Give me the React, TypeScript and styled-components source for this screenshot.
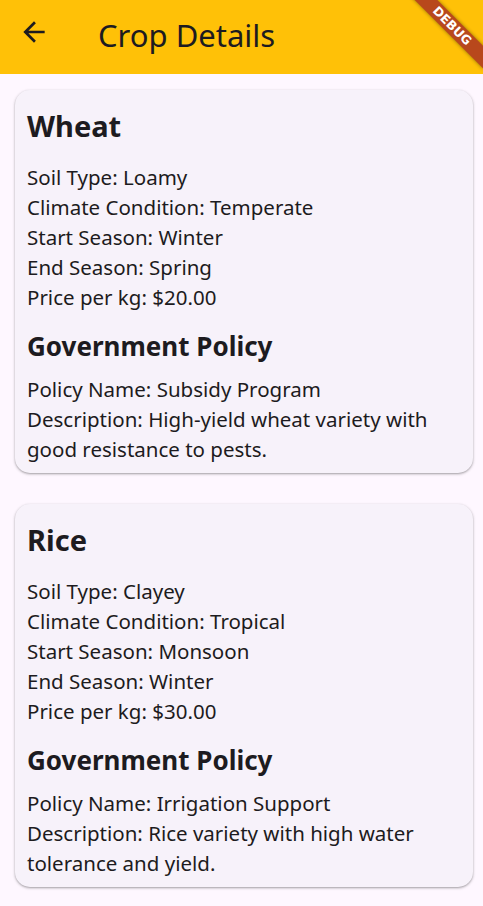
import React from 'react';
import { createGlobalStyle, styled } from 'styled-components';

const AMBER = '#FFC107';
const PAGE_BG = '#FEF7FF';
const CARD_BG = '#F7F2FA';
const TEXT = '#1D1B20';
const FONT = `'Noto Sans', 'Open Sans', sans-serif`;

interface Crop {
  name: string;
  soilType: string;
  climate: string;
  startSeason: string;
  endSeason: string;
  price: number;
  policyName: string;
  description: string;
}

const crops: Crop[] = [
  {
    name: 'Wheat',
    soilType: 'Loamy',
    climate: 'Temperate',
    startSeason: 'Winter',
    endSeason: 'Spring',
    price: 20,
    policyName: 'Subsidy Program',
    description: 'High-yield wheat variety with good resistance to pests.',
  },
  {
    name: 'Rice',
    soilType: 'Clayey',
    climate: 'Tropical',
    startSeason: 'Monsoon',
    endSeason: 'Winter',
    price: 30,
    policyName: 'Irrigation Support',
    description: 'Rice variety with high water tolerance and yield.',
  },
];

function BackIcon() {
  return (
    <svg width="32" height="32" viewBox="0 0 24 24" fill={TEXT}>
      <path d="M20 11H7.83l5.59-5.59L12 4l-8 8 8 8 1.41-1.41L7.83 13H20v-2z" />
    </svg>
  );
}

function CropCard({ crop }: { crop: Crop }) {
  return (
    <Card>
      <CropName>{crop.name}</CropName>
      <InfoList>
        <InfoLine>Soil Type: {crop.soilType}</InfoLine>
        <InfoLine>Climate Condition: {crop.climate}</InfoLine>
        <InfoLine>Start Season: {crop.startSeason}</InfoLine>
        <InfoLine>End Season: {crop.endSeason}</InfoLine>
        <InfoLine>Price per kg: ${crop.price.toFixed(2)}</InfoLine>
      </InfoList>
      <SectionTitle>Government Policy</SectionTitle>
      <PolicyList>
        <InfoLine>Policy Name: {crop.policyName}</InfoLine>
        <InfoLine>Description: {crop.description}</InfoLine>
      </PolicyList>
    </Card>
  );
}

export default function App() {
  return (
    <Screen>
      <GlobalStyle />
      <AppBar>
        <BackButton>
          <BackIcon />
        </BackButton>
        <BarTitle>Crop Details</BarTitle>
      </AppBar>
      <CardList>
        {crops.map((crop) => (
          <CropCard key={crop.name} crop={crop} />
        ))}
      </CardList>
      <DebugBanner>DEBUG</DebugBanner>
    </Screen>
  );
}

const GlobalStyle = createGlobalStyle`
  html, body {
    margin: 0;
    padding: 0;
    background: ${PAGE_BG};
  }
  * {
    box-sizing: border-box;
  }
`;

const Screen = styled.div`
  position: relative;
  width: 483px;
  height: 906px;
  overflow: hidden;
  background: ${PAGE_BG};
  font-family: ${FONT};
  color: ${TEXT};
`;

const AppBar = styled.header`
  display: flex;
  align-items: flex-start;
  height: 74px;
  padding: 15px 0 0 18px;
  background: ${AMBER};
`;

const BackButton = styled.div`
  display: flex;
  width: 32px;
  height: 32px;
  margin-top: 1px;
`;

const BarTitle = styled.h1`
  margin: 0 0 0 48px;
  font-size: 31px;
  font-weight: 400;
  line-height: 40px;
`;

const CardList = styled.main`
  display: flex;
  flex-direction: column;
  gap: 31px;
  padding: 16px 10px 0 15px;
`;

const Card = styled.section`
  display: flex;
  flex-direction: column;
  padding: 12px 12px 9px;
  border-radius: 15px;
  background: ${CARD_BG};
  box-shadow: 0 1px 2px rgba(0, 0, 0, 0.28), 0 1px 3px 1px rgba(0, 0, 0, 0.08);
`;

const CropName = styled.h2`
  margin: 0;
  font-size: 29px;
  font-weight: 700;
  line-height: 48px;
`;

const InfoList = styled.div`
  display: flex;
  flex-direction: column;
  margin-top: 12px;
`;

const PolicyList = styled(InfoList)`
  margin-top: 10px;
`;

const InfoLine = styled.p`
  margin: 0;
  font-size: 20.5px;
  line-height: 30px;
`;

const SectionTitle = styled.h3`
  margin: 16px 0 0;
  font-size: 26px;
  font-weight: 700;
  line-height: 36px;
`;

/* flutter's debug ribbon, laid over the top-right corner */
const DebugBanner = styled.div`
  position: absolute;
  top: 18px;
  right: -21px;
  width: 104px;
  height: 16px;
  transform: rotate(45deg);
  background: #b8481c;
  box-shadow: 0 0 4px rgba(0, 0, 0, 0.45);
  color: #ffffff;
  font-family: 'DejaVu Sans', sans-serif;
  font-size: 12.5px;
  font-weight: 700;
  line-height: 16px;
  text-align: center;
`;
